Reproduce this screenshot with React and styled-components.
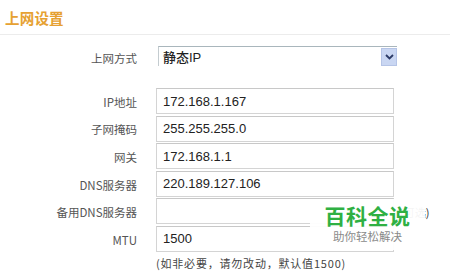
import React from 'react'
import styled, { createGlobalStyle } from 'styled-components'

const GlobalStyle = createGlobalStyle`
    body {
        margin: 0;
        background: #fff;
        font-family: "Liberation Sans", "Noto Sans CJK SC", sans-serif;
    }
`

const Page = styled.div`
    position: relative;
    width: 450px;
    height: 276px;
    overflow: hidden;
`

const Header = styled.div`
    height: 35px;
    box-sizing: border-box;
    padding: 10px 0 0 5px;
    border-bottom: 1px solid #ececec;
`

const Title = styled.div`
    color: #e6a132;
    font-size: 14.5px;
    font-weight: 700;
    line-height: 18px;
    letter-spacing: 0.2px;
`

const Form = styled.div`
    display: grid;
    grid-template-columns: 137px 238px auto;
    column-gap: 19px;
    align-items: center;
    padding-top: 11px;
`

const Label = styled.div`
    text-align: right;
    font-family: "Noto Sans CJK SC", "DejaVu Sans", sans-serif;
    font-size: 11.5px;
    color: #555;
    margin-top: ${p => p.$shift || 0}px;
`

const Select = styled.div`
    display: flex;
    align-items: center;
    justify-content: space-between;
    height: 20px;
    box-sizing: border-box;
    margin-left: 2px;
    margin-right: -3px;
    border-top: 1px solid #a9b6bc;
    border-left: 1px solid #c4ccd0;
    padding-left: 4px;
    font-size: 13px;
    font-weight: 500;
    color: #222;
`

const DropButton = styled.div`
    width: 16px;
    height: 18px;
    margin-top: 1px;
    background: #c9d6f2;
    border: 1px solid #b5c4e6;
    box-sizing: border-box;
    display: flex;
    align-items: center;
    justify-content: center;
`

const Spacer = styled.div`
    grid-column: 1 / -1;
    height: ${p => p.$h}px;
`

const Input = styled.div`
    height: 26px;
    box-sizing: border-box;
    border: 1px solid #d4d4d4;
    border-top-color: #c8c8c8;
    padding-left: 6px;
    display: flex;
    align-items: center;
    font-size: 13px;
    color: #222;
    margin-bottom: 1.6px;
`

const Hint = styled.div`
    font-family: "Noto Sans CJK SC", sans-serif;
    font-size: 11px;
    color: #333;
    margin-left: -13px;
`

const Note = styled.div`
    grid-column: 2 / 4;
    font-family: "Noto Sans CJK SC", sans-serif;
    font-size: 11px;
    letter-spacing: 0.8px;
    color: #444;
    margin-top: 1px;
    white-space: nowrap;
`

const Watermark = styled.div`
    position: absolute;
    left: 310px;
    top: 199px;
    width: 115px;
    height: 51px;
    background: rgba(255, 255, 255, 0.95);
    display: flex;
    flex-direction: column;
    align-items: center;
    padding-top: 3px;
    box-sizing: border-box;
`

const Brand = styled.div`
    font-family: "Noto Sans CJK SC", sans-serif;
    font-size: 21px;
    font-weight: 700;
    color: #2fb043;
    line-height: 26px;
    letter-spacing: 0.5px;
`

const Slogan = styled.div`
    font-family: "Noto Sans CJK SC", sans-serif;
    font-size: 11.5px;
    color: #8a8a8a;
    line-height: 16px;
`

const Chevron = () => (
    <svg width="9" height="6" viewBox="0 0 9 6">
        <path d="M1 1 L4.5 4.5 L8 1" fill="none" stroke="#2b3a66" strokeWidth="1.8" />
    </svg>
)

const fields = [
    { label: 'IP地址', value: '172.168.1.167' },
    { label: '子网掩码', value: '255.255.255.0' },
    { label: '网关', value: '172.168.1.1' },
    { label: 'DNS服务器', value: '220.189.127.106' },
    { label: '备用DNS服务器', value: '', hint: '(可选)' },
    { label: 'MTU', value: '1500' },
]

const App = () => {
    return (
        <Page>
            <GlobalStyle />
            <Header>
                <Title>上网设置</Title>
            </Header>
            <Form>
                <Label $shift={3}>上网方式</Label>
                <Select>
                    <span>静态IP</span>
                    <DropButton><Chevron /></DropButton>
                </Select>
                <div />
                <Spacer $h={22} />
                {fields.map(f => (
                    <React.Fragment key={f.label}>
                        <Label>{f.label}</Label>
                        <Input>{f.value}</Input>
                        <Hint>{f.hint}</Hint>
                    </React.Fragment>
                ))}
                <Note>(如非必要，请勿改动，默认值1500)</Note>
            </Form>
            <Watermark>
                <Brand>百科全说</Brand>
                <Slogan>助你轻松解决</Slogan>
            </Watermark>
        </Page>
    )
}

export default App
